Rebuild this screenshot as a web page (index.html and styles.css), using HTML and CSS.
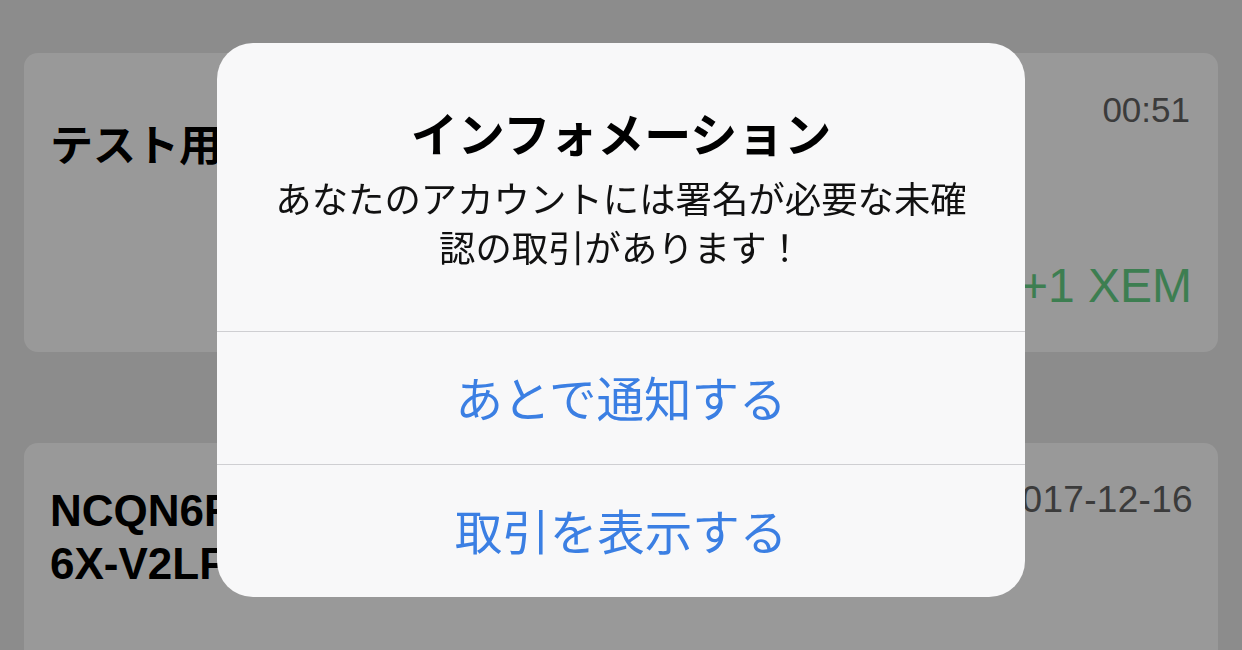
FILE: index.html
```html
<!DOCTYPE html>
<html lang="ja">
<head>
<meta charset="utf-8">
<title>インフォメーション</title>
<link rel="stylesheet" href="styles.css">
</head>
<body>
<main class="list">
  <section class="card card-first">
    <div class="card-name">テスト用アカウント</div>
    <div class="card-side">
      <div class="card-time">00:51</div>
      <div class="card-amount">+1 XEM</div>
    </div>
  </section>
  <section class="card card-second">
    <div class="card-name addr">NCQN6RB7SHDF2Q4R3FVWMK<br>6X-V2LF</div>
    <div class="card-side">
      <div class="card-time card-date">2017-12-16</div>
    </div>
  </section>
</main>

<div class="backdrop"></div>

<div class="alert" role="alertdialog">
  <div class="alert-body">
    <h1 class="alert-title">インフォメーション</h1>
    <p class="alert-message">あなたのアカウントには署名が必要な未確認の取引があります！</p>
  </div>
  <button class="alert-btn">あとで通知する</button>
  <button class="alert-btn">取引を表示する</button>
</div>
</body>
</html>
```

FILE: styles.css
```css
html, body {
  margin: 0;
  padding: 0;
}

body {
  width: 1242px;
  height: 650px;
  overflow: hidden;
  background: #e9e9e9;
  font-family: "Liberation Sans", "Noto Sans CJK JP", sans-serif;
}

.list {
  display: flex;
  flex-direction: column;
  gap: 91px;
  padding: 53px 24px 0 24px;
}

.card {
  display: flex;
  justify-content: space-between;
  background: #ffffff;
  border-radius: 14px;
  padding: 0 26px 0 26px;
}

.card-first {
  height: 299px;
  box-sizing: border-box;
  padding-bottom: 38px;
}

.card-second {
  height: 300px;
  box-sizing: border-box;
}

.card-name {
  font-family: "Liberation Sans", "Noto Sans CJK JP", sans-serif;
  font-weight: bold;
  font-size: 43px;
  line-height: 48px;
  color: #000;
  margin-top: 69px;
  white-space: nowrap;
}

.addr {
  font-size: 44px;
  line-height: 53px;
  margin-top: 41px;
}

.card-side {
  display: flex;
  flex-direction: column;
  justify-content: space-between;
  align-items: flex-end;
}

.card-time {
  font-size: 35px;
  line-height: 40px;
  color: #636363;
  margin-top: 37px;
  margin-right: 2px;
}

.card-date {
  font-size: 37px;
  letter-spacing: 0.3px;
  margin-right: -1px;
}

.card-amount {
  font-size: 48px;
  line-height: 56px;
  color: #67d287;
}

.backdrop {
  position: fixed;
  inset: 0;
  background: rgba(0, 0, 0, 0.4);
}

.alert {
  position: absolute;
  left: 217px;
  top: 43px;
  width: 808px;
  display: flex;
  flex-direction: column;
  background: #f8f8f9;
  border-radius: 36px;
  overflow: hidden;
  font-family: "Noto Sans CJK JP", sans-serif;
}

.alert-body {
  padding: 61px 40px 60px 40px;
  text-align: center;
}

.alert-title {
  margin: 0 0 13px 0;
  font-size: 47px;
  line-height: 56px;
  font-weight: bold;
  color: #000;
}

.alert-message {
  margin: 0 10px;
  font-size: 36.4px;
  line-height: 49px;
  color: #111;
}

.alert-btn {
  display: block;
  height: 133px;
  width: 100%;
  margin: 0;
  padding: 0 0 4px 0;
  border: 0;
  border-top: 1px solid #cfcfd2;
  background: transparent;
  font-family: "Noto Sans CJK JP", sans-serif;
  font-size: 47.5px;
  color: #3b7fe3;
  text-align: center;
}
```
